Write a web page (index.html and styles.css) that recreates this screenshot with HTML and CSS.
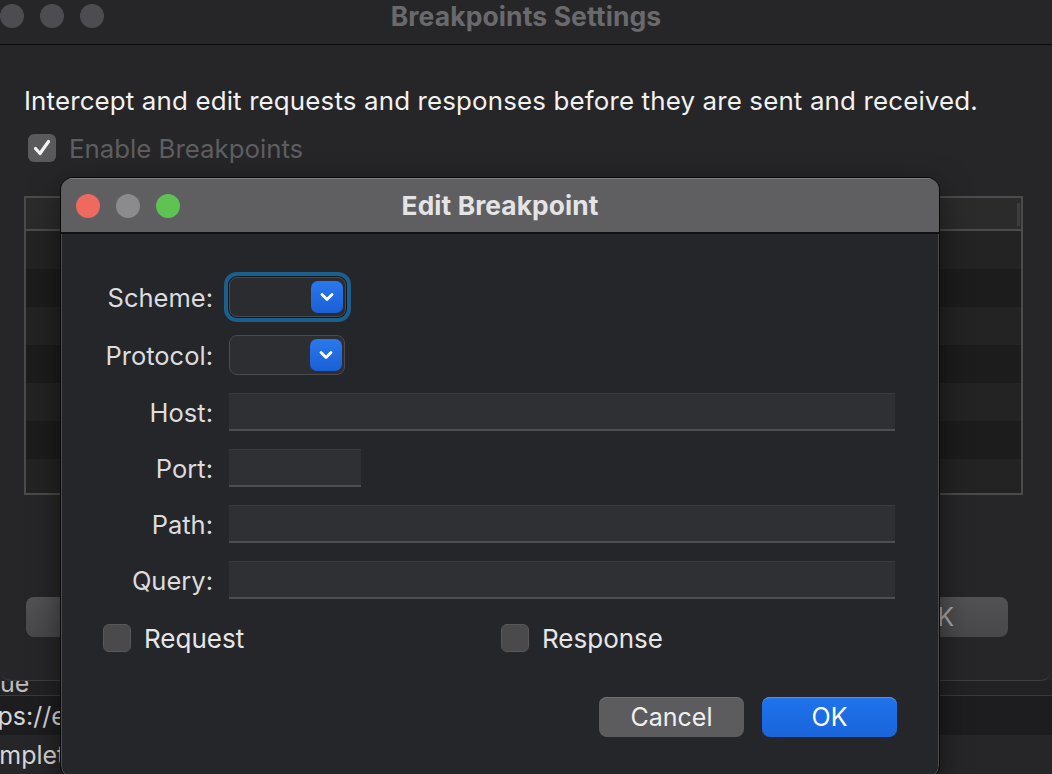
FILE: index.html
```html
<!DOCTYPE html>
<html>
<head>
<meta charset="utf-8">
<link rel="stylesheet" href="styles.css">
</head>
<body>
<div class="screen">
  <div class="bgwin">
    <div class="titlebar">
      <div class="lights">
        <span class="light dim"></span>
        <span class="light dim"></span>
        <span class="light dim"></span>
      </div>
      <div class="wintitle">Breakpoints Settings</div>
      <div></div>
    </div>
    <p class="desc">Intercept and edit requests and responses before they are sent and received.</p>
    <label class="enable">
      <span class="cb checked">
        <svg viewBox="0 0 28 28" width="28" height="28"><path d="M7.5 14.5 L12 19.5 L20.5 7.5" fill="none" stroke="#f2f2f2" stroke-width="3.2" stroke-linecap="round" stroke-linejoin="round"/></svg>
      </span>
      <span>Enable Breakpoints</span>
    </label>
    <div class="table">
      <div class="thead"><span class="colsep"></span></div>
      <div class="trow"></div>
      <div class="trow alt"></div>
      <div class="trow"></div>
      <div class="trow alt"></div>
      <div class="trow"></div>
      <div class="trow alt"></div>
      <div class="trow"></div>
    </div>
    <div class="bgbuttons">
      <button class="bgbtn left">Remove</button>
      <button class="bgbtn right">OK</button>
    </div>
  </div>
  <div class="lower">
    <div class="clipped"><span>Value</span></div>
    <div class="lrow dark"><span class="url">https://example.com/</span></div>
    <div class="lrow"><span class="comp">Complete</span></div>
  </div>

  <div class="dialog">
    <div class="dtitlebar">
      <div class="lights dl">
        <span class="light red"></span>
        <span class="light gray"></span>
        <span class="light green"></span>
      </div>
      <div class="dtitle">Edit Breakpoint</div>
      <div></div>
    </div>
    <div class="dbody">
      <div class="form">
        <div class="frow r1">
          <span class="lbl">Scheme:</span>
          <div class="popup focused">
            <span class="pbtn"><svg viewBox="0 0 32 32" width="32" height="32"><path d="M11 13.5 L16 18.5 L21 13.5" fill="none" stroke="#fff" stroke-width="2.8" stroke-linecap="round" stroke-linejoin="round"/></svg></span>
          </div>
        </div>
        <div class="frow r2">
          <span class="lbl">Protocol:</span>
          <div class="popup">
            <span class="pbtn"><svg viewBox="0 0 32 32" width="32" height="32"><path d="M11 13.5 L16 18.5 L21 13.5" fill="none" stroke="#fff" stroke-width="2.8" stroke-linecap="round" stroke-linejoin="round"/></svg></span>
          </div>
        </div>
        <div class="frow">
          <span class="lbl">Host:</span>
          <div class="field wide"></div>
        </div>
        <div class="frow">
          <span class="lbl">Port:</span>
          <div class="field port"></div>
        </div>
        <div class="frow">
          <span class="lbl">Path:</span>
          <div class="field wide"></div>
        </div>
        <div class="frow">
          <span class="lbl">Query:</span>
          <div class="field wide"></div>
        </div>
      </div>
      <div class="checks">
        <label class="check"><span class="cb"></span><span>Request</span></label>
        <label class="check"><span class="cb"></span><span>Response</span></label>
      </div>
      <div class="actions">
        <button class="btn cancel">Cancel</button>
        <button class="btn ok">OK</button>
      </div>
    </div>
  </div>
</div>
</body>
</html>
```

FILE: styles.css
```css
* { box-sizing: border-box; }
html, body {
  margin: 0;
  padding: 0;
  background: #262628;
}
body {
  font-family: "Inter", "Noto Sans", sans-serif;
  width: 1052px;
  height: 774px;
  overflow: hidden;
}
.screen {
  position: relative;
  width: 1052px;
  height: 774px;
  overflow: hidden;
}

/* background window */
.bgwin {
  height: 681px;
  background: #262628;
  border-bottom: 1px solid #3e3e40;
  border-radius: 0 0 12px 12px;
  overflow: hidden;
}
.titlebar {
  height: 45px;
  border-bottom: 1px solid #0c0c0d;
  display: grid;
  grid-template-columns: 1fr auto 1fr;
  align-items: start;
  padding-top: 4px;
}
.lights {
  display: flex;
  gap: 16px;
}
.light {
  width: 24px;
  height: 24px;
  border-radius: 50%;
  display: block;
}
.light.dim { background: #4d4d51; }
.wintitle {
  font-size: 26.5px;
  font-weight: 700;
  color: #6a6a6d;
  line-height: 24px;
  letter-spacing: 0.1px;
}
.desc {
  margin: 40px 0 0 24px;
  font-size: 25.9px;
  line-height: 32px;
  color: #f2f2f2;
  letter-spacing: 0.15px;
}
.enable {
  display: flex;
  align-items: center;
  gap: 13px;
  margin: 15px 0 0 28px;
  height: 32px;
  font-size: 25.8px;
  color: #5e5e61;
}
.cb {
  width: 28px;
  height: 28px;
  border-radius: 6px;
  background: #4a4a4d;
  display: block;
  flex: none;
}
.cb.checked {
  background: #5a5a5d;
}
.cb svg { display: block; }
.table {
  margin: 32px 0 0 24px;
  width: 999px;
  height: 299px;
  border: 2px solid #4b4b4c;
  overflow: hidden;
  background: #232324;
}
.thead {
  height: 33px;
  background: #2b2b2c;
  border-bottom: 2px solid #4b4b4c;
  display: flex;
  justify-content: flex-end;
  padding: 5px 1px 0 0;
}
.colsep {
  width: 3px;
  height: 23px;
  background: #3e3e40;
  display: block;
}
.trow {
  height: 38px;
  background: #232324;
}
.trow.alt { background: #1c1c1d; }
.bgbuttons {
  display: flex;
  justify-content: space-between;
  margin: 102px 44px 0 26px;
}
.bgbtn {
  height: 40px;
  border: none;
  border-radius: 8px;
  background: linear-gradient(#525254, #48484a);
  color: #a9a9ab;
  font-family: inherit;
  font-size: 25px;
}
.bgbtn.left { width: 190px; }
.bgbtn.right { width: 144px; }

/* lower window */
.lower {
  height: 93px;
  background: #222224;
  font-size: 25px;
  color: #d6d6d8;
}
.clipped {
  height: 15px;
  overflow: hidden;
  border-bottom: 1px solid #3a3a3c;
}
.clipped span {
  display: block;
  line-height: 30px;
  margin-top: -13px;
  text-indent: -36px;
  color: #bdbdbf;
}
.lrow {
  height: 39px;
  display: flex;
  align-items: center;
  overflow: hidden;
  white-space: nowrap;
  background: #262628;
}
.lrow.dark { background: #1d1d1f; }
.url { margin-left: -33px; }
.comp { margin-left: -34px; }

/* dialog */
.dialog {
  position: absolute;
  left: 60px;
  top: 177px;
  width: 880px;
  height: 602px;
  border: 1px solid #0a0a0b;
  border-radius: 13px;
  background: #25262a;
  box-shadow: inset 0 0 0 1px #4c4c4f, 0 10px 30px rgba(0,0,0,0.5);
  overflow: hidden;
}
.dtitlebar {
  height: 56px;
  background: #5f5f61;
  border-top: 1px solid #7e7e80;
  border-bottom: 2px solid #111113;
  display: grid;
  grid-template-columns: 1fr auto 1fr;
  align-items: center;
  padding-left: 15px;
}
.light.red { background: #ee6a5f; }
.light.gray { background: #8b8b8d; }
.light.green { background: #5ec352; }
.dtitle {
  font-size: 26.3px;
  font-weight: 700;
  color: #e4e4e6;
  letter-spacing: 0.1px;
  margin-right: 15px;
}
.dbody {
  padding-top: 35px;
  color: #e0e0e2;
  font-size: 25.5px;
}
.form {
  display: flex;
  flex-direction: column;
  padding-right: 44px;
}
.frow {
  height: 56px;
  display: grid;
  grid-template-columns: 152px 1fr;
  column-gap: 16px;
  align-items: center;
}
.frow.r1 { margin-bottom: 2px; }
.frow.r2 { margin-bottom: 1px; }
.lbl {
  text-align: right;
  color: #dcdcde;
  font-size: 25.5px;
}
.field {
  height: 38px;
  background: #2f3034;
  border-top: 1px solid #3a3b3e;
  border-bottom: 2px solid #4e4f52;
}
.field.port { width: 132px; }
.popup {
  position: relative;
  height: 40px;
  width: 117px;
  border-radius: 8px;
  background: #2d2e32;
  border: 1px solid #4a4b4f;
  display: flex;
  justify-content: flex-end;
  align-items: center;
  padding-right: 2px;
}
.popup.focused {
  box-shadow: 0 0 0 1px #16171a, 0 0 0 5px #1b5f8f;
  background: #2b2c30;
}
.r2 .popup { width: 116px; }
.pbtn {
  width: 32px;
  height: 32px;
  border-radius: 7px;
  background: linear-gradient(#2a78ec, #1a5fd6);
  display: block;
}
.pbtn svg { display: block; }
.checks {
  display: grid;
  grid-template-columns: 398px 1fr;
  height: 56px;
  align-items: center;
  padding-left: 42px;
  margin-top: 2px;
}
.check {
  display: flex;
  align-items: center;
  gap: 13px;
  font-size: 26px;
  color: #e6e6e8;
}
.check .cb {
  background: #4a4a4d;
  border: 1px solid #58585b;
}
.actions {
  display: flex;
  justify-content: flex-end;
  gap: 18px;
  margin-top: 31px;
  padding-right: 42px;
}
.btn {
  height: 40px;
  border: none;
  border-radius: 8px;
  font-family: inherit;
  font-size: 25px;
  color: #f0f0f2;
}
.btn.cancel {
  width: 145px;
  background: #5c5c5e;
  box-shadow: inset 0 1px 0 #6e6e70;
}
.btn.ok {
  width: 135px;
  background: linear-gradient(#1f73ec, #1a65dc);
  color: #fff;
  box-shadow: inset 0 1px 0 #4d92f0;
}
```
